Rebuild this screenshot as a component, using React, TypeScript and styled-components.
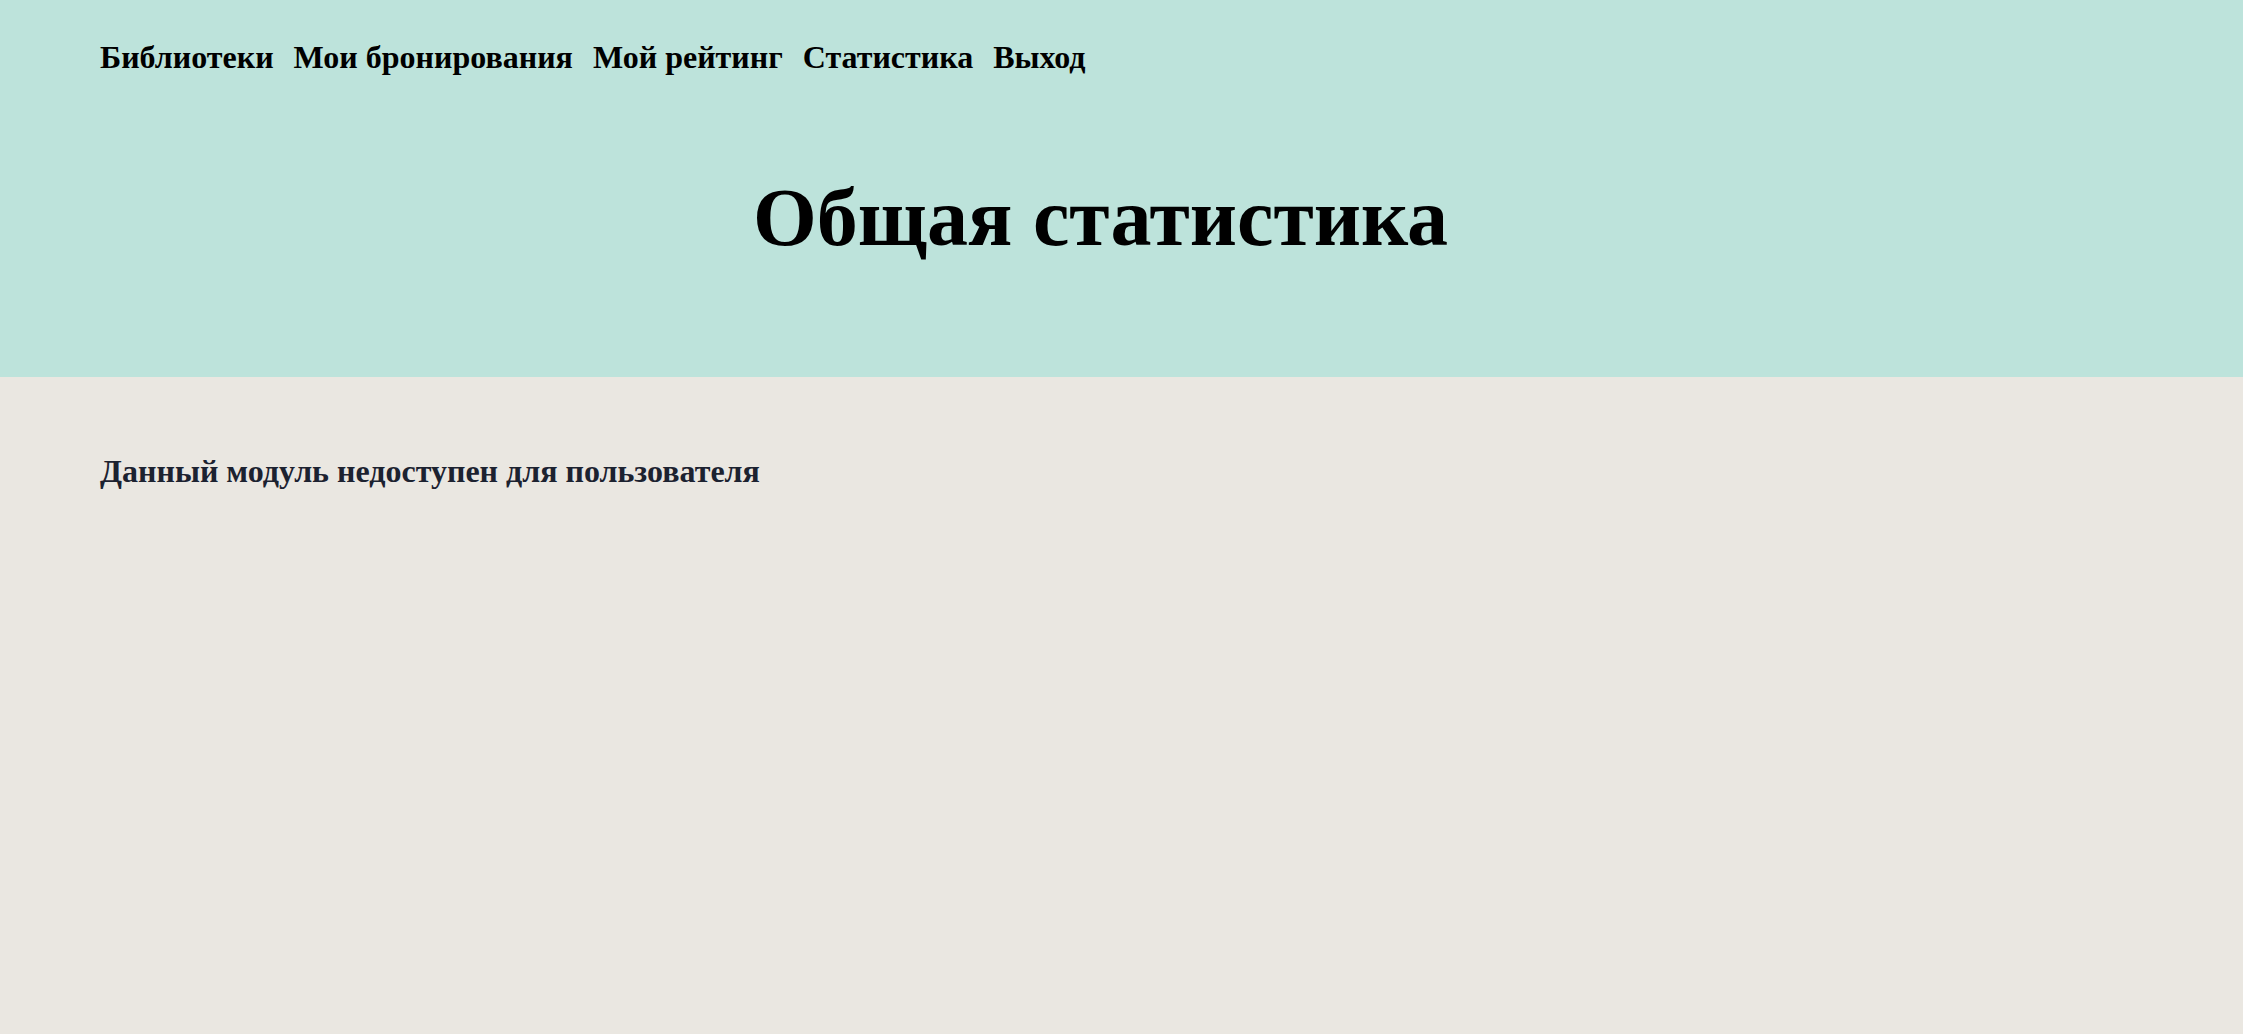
import React from 'react';
import styled, { createGlobalStyle } from 'styled-components';

const GlobalStyle = createGlobalStyle`
  html, body {
    margin: 0;
    padding: 0;
    background: #eae7e1;
    font-family: "Liberation Serif", "Times New Roman", serif;
  }
`;

const Page = styled.div`
  min-height: 100vh;
  display: flex;
  flex-direction: column;
  background: #eae7e1;
`;

const Header = styled.header`
  background: #bde3db;
  height: 377px;
  box-sizing: border-box;
  padding: 39px 100px 0 100px;
  display: flex;
  flex-direction: column;
`;

const Nav = styled.nav`
  display: flex;
  gap: 20px;
`;

const NavLink = styled.a`
  font-size: 32px;
  font-weight: 700;
  color: #000;
  text-decoration: none;
  cursor: pointer;
`;

const Title = styled.h1`
  margin: 101px 0 0 0;
  padding-right: 42px;
  text-align: center;
  font-size: 82px;
  font-weight: 700;
  color: #000;
  line-height: 1;
`;

const Content = styled.main`
  padding: 76px 100px;
`;

const Notice = styled.h3`
  margin: 0;
  font-size: 32px;
  font-weight: 700;
  color: #1c2230;
`;

const links = ['Библиотеки', 'Мои бронирования', 'Мой рейтинг', 'Статистика', 'Выход'];

export default function App() {
  return (
    <Page>
      <GlobalStyle />
      <Header>
        <Nav>
          {links.map(l => <NavLink key={l}>{l}</NavLink>)}
        </Nav>
        <Title>Общая статистика</Title>
      </Header>
      <Content>
        <Notice>Данный модуль недоступен для пользователя</Notice>
      </Content>
    </Page>
  );
}
